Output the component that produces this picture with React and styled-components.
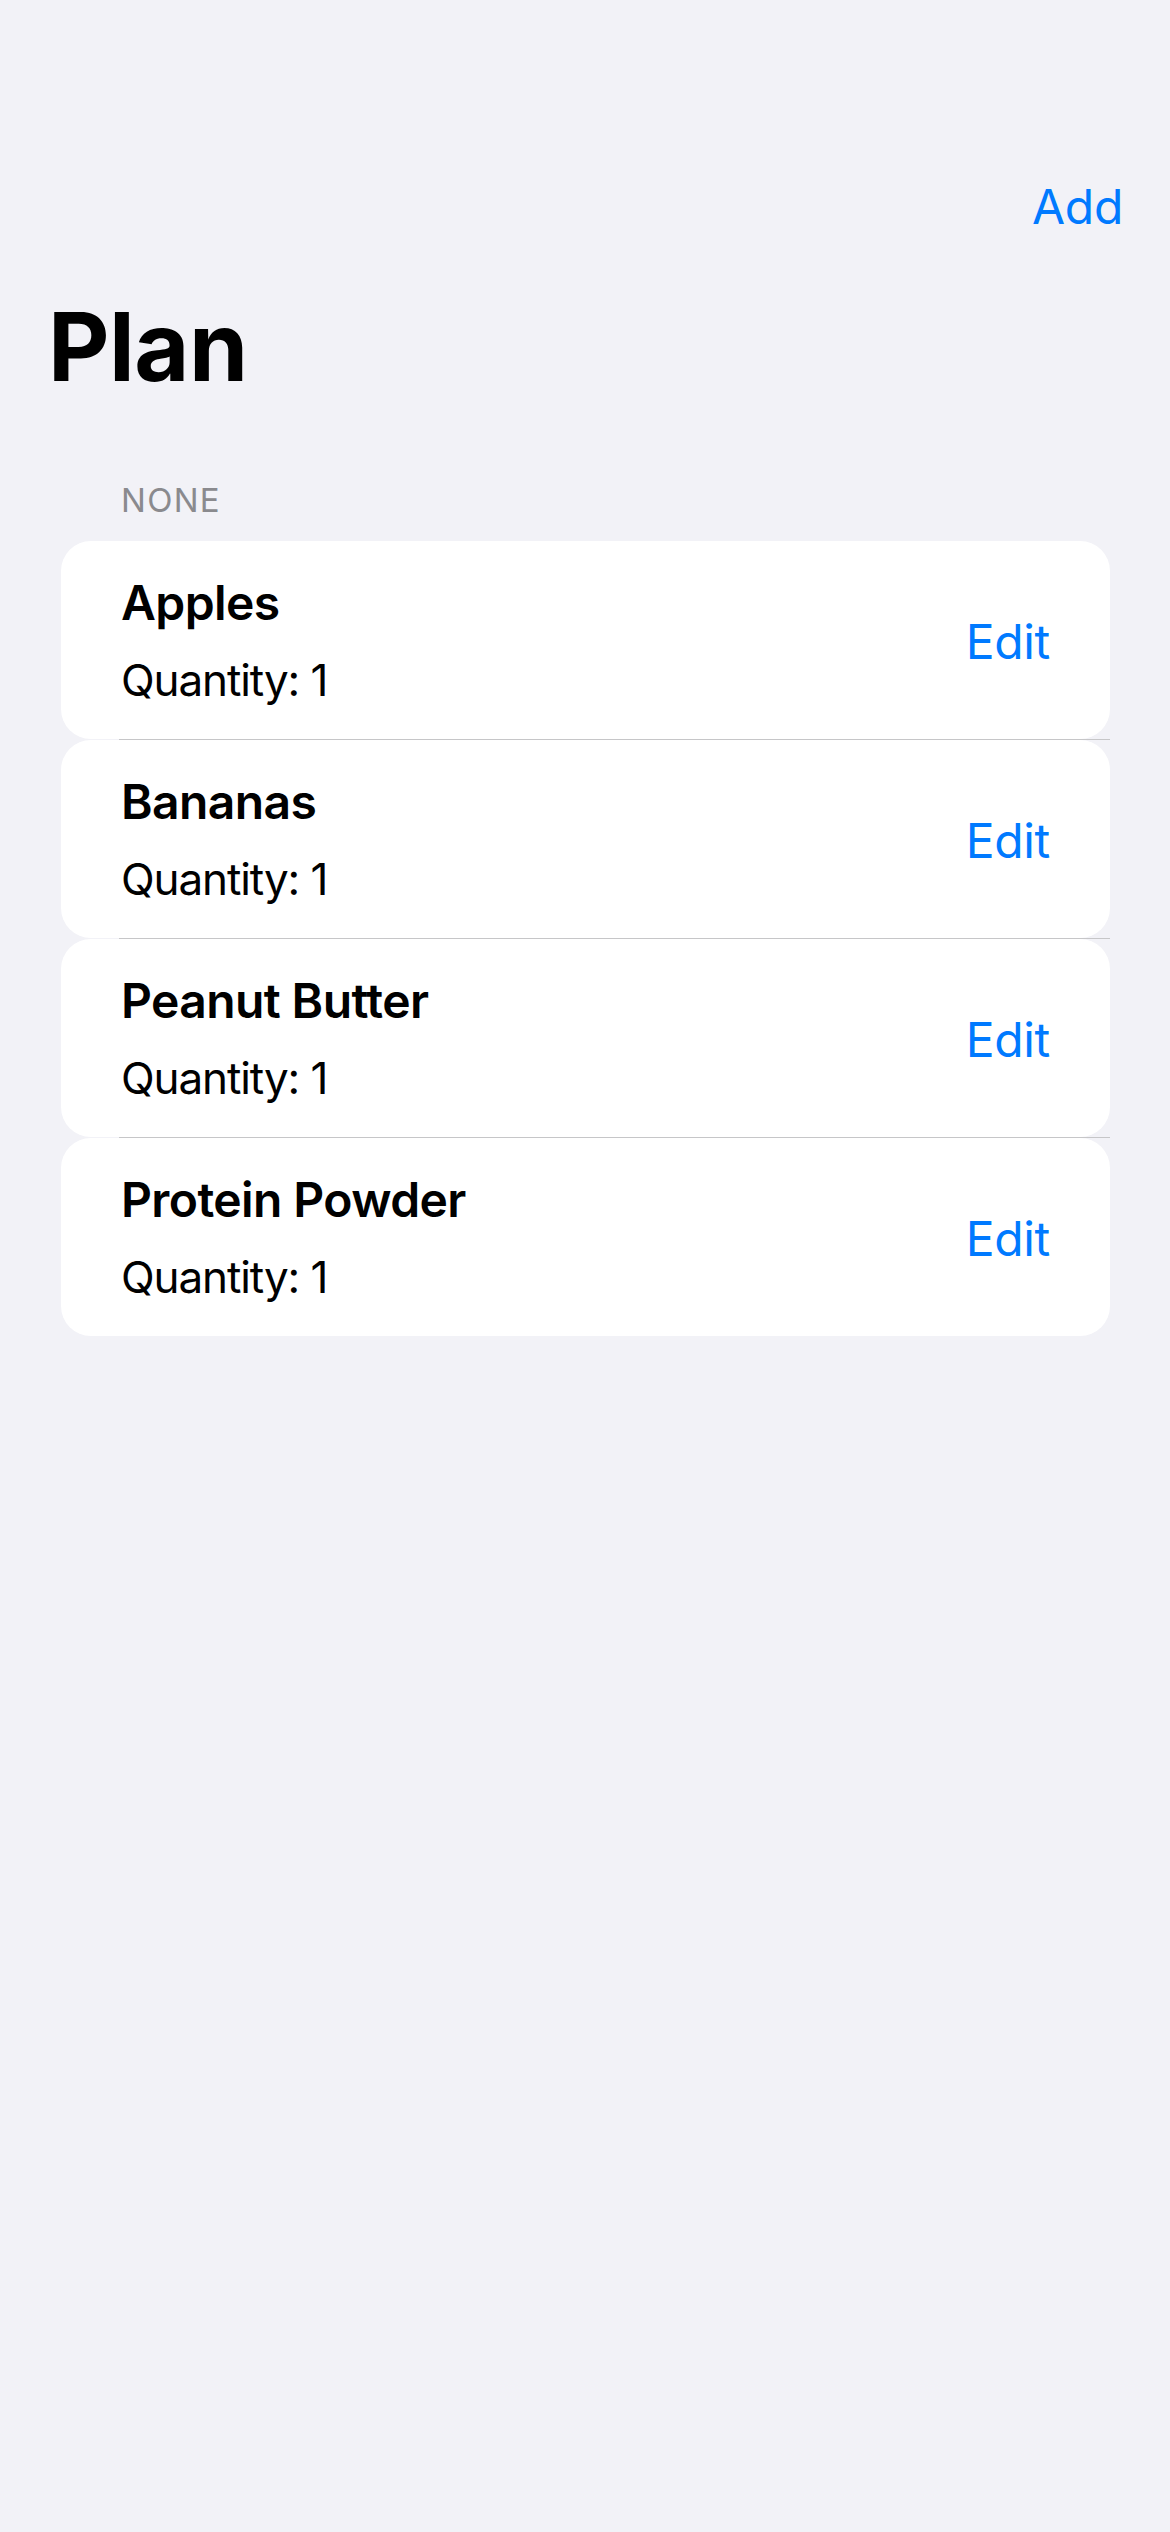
import React from 'react';
import styled, { createGlobalStyle } from 'styled-components';

const GlobalStyle = createGlobalStyle`
   html, body {
      margin: 0;
      padding: 0;
      background: #f2f2f7;
   }

   body {
      font-family: Inter, 'Noto Sans', 'Liberation Sans', sans-serif;
      -webkit-font-smoothing: antialiased;
   }
`;

const items = [
   { name: 'Apples', quantity: 1 },
   { name: 'Bananas', quantity: 1 },
   { name: 'Peanut Butter', quantity: 1 },
   { name: 'Protein Powder', quantity: 1 },
];

const App = () => {
   return (
      <Screen>
         <GlobalStyle />

         <NavBar>
            <BarButton>Add</BarButton>
         </NavBar>

         <LargeTitle>Plan</LargeTitle>

         <SectionHeader>NONE</SectionHeader>

         <List>
            {items.map((item, id) => (
               <Row key={item.name}>
                  <Cell>
                     <CellText>
                        <ItemName>{item.name}</ItemName>
                        <ItemQuantity>Quantity: {item.quantity}</ItemQuantity>
                     </CellText>
                     <EditButton>Edit</EditButton>
                  </Cell>
                  {/* la ultima fila no lleva separador */}
                  {id < items.length - 1 && <Separator />}
               </Row>
            ))}
         </List>
      </Screen>
   );
};

export default App;

const Screen = styled.div`
   min-height: 2532px;
   background: #f2f2f7;
   display: flex;
   flex-direction: column;
`;

const NavBar = styled.div`
   margin-top: 141px;
   height: 132px;
   display: flex;
   align-items: center;
   justify-content: flex-end;
   padding-right: 47px;
`;

const BarButton = styled.span`
   font-size: 48px;
   line-height: 48px;
   letter-spacing: -0.3px;
   color: #007aff;
`;

const LargeTitle = styled.h1`
   margin: 26px 0 0;
   padding-left: 48px;
   font-size: 95px;
   line-height: 95px;
   font-weight: 700;
   letter-spacing: -0.5px;
   color: #000;
`;

const SectionHeader = styled.div`
   margin-top: 90px;
   padding-left: 121px;
   font-size: 33px;
   line-height: 33px;
   letter-spacing: 1.3px;
   color: #8a8a8e;
`;

const List = styled.div`
   margin: 24px 60px 0 61px;
   display: flex;
   flex-direction: column;
`;

const Row = styled.div`
   display: flex;
   flex-direction: column;
`;

const Cell = styled.div`
   height: 198px;
   box-sizing: border-box;
   background: #fff;
   border-radius: 30px;
   display: flex;
   align-items: center;
   justify-content: space-between;
   padding: 0 60px 0 60px;
`;

const CellText = styled.div`
   display: flex;
   flex-direction: column;
   gap: 31px;
   align-self: flex-start;
   padding-top: 38px;
`;

const ItemName = styled.div`
   font-size: 48px;
   line-height: 48px;
   font-weight: 600;
   letter-spacing: -0.6px;
   color: #000;
`;

const ItemQuantity = styled.div`
   font-size: 44px;
   line-height: 44px;
   letter-spacing: -1.1px;
   color: #000;
`;

const EditButton = styled.span`
   font-size: 48px;
   line-height: 48px;
   letter-spacing: -0.3px;
   color: #007aff;
   margin-top: 3px;
`;

const Separator = styled.div`
   height: 1px;
   margin-left: 58px;
   background: #c6c6c8;
`;
